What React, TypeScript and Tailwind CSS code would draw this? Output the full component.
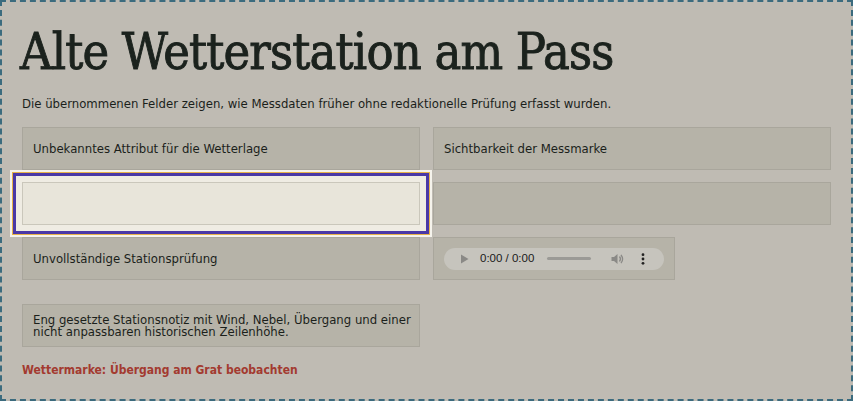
export default function App() {
  const sans = { fontFamily: '"DejaVu Sans Condensed", "DejaVu Sans", sans-serif' };
  return (
    <div
      className="h-[401px] w-[853px] border-2 border-dashed border-[#3b6b7e] bg-[#bfbbb3] px-5 pt-[18px] text-[#1b1f1b]"
      style={sans}
    >
      <h1 className="-ml-[2px] font-['DejaVu_Serif_Condensed','DejaVu_Serif',serif] text-[50px] leading-[64px] tracking-[-0.8px] text-[#1b221d] [-webkit-text-stroke:0.9px_#1b221d]">
        Alte Wetterstation am Pass
      </h1>
      <p className="mt-[11px] text-[13px] leading-[18px]">
        Die übernommenen Felder zeigen, wie Messdaten früher ohne redaktionelle Prüfung erfasst wurden.
      </p>

      <div className="mt-[14px] grid grid-cols-[398px_398px] gap-x-[13px] gap-y-3">
        <div className="flex h-[43px] items-center border border-[#a9a69c] bg-[#b6b3a8] px-[10px] text-[13px]">
          Unbekanntes Attribut für die Wetterlage
        </div>
        <div className="flex h-[43px] items-center border border-[#a9a69c] bg-[#b6b3a8] px-[10px] text-[13px]">
          Sichtbarkeit der Messmarke
        </div>

        <div className="relative h-[43px]">
          <div className="absolute -inset-[12px] bg-[#f5f3ec]" />
          <div className="absolute -inset-[10px] border border-[#e7b24a]" />
          <div className="absolute -inset-[9px] border-[3px] border-[#4a38a6] bg-[#efece3]" />
          <div className="absolute inset-0 border border-[#cac7bb] bg-[#e8e5da]" />
        </div>
        <div className="h-[43px] border border-[#a9a69c] bg-[#b6b3a8]" />

        <div className="flex h-[43px] items-center border border-[#a9a69c] bg-[#b6b3a8] px-[10px] text-[13px]">
          Unvollständige Stationsprüfung
        </div>
        <div className="flex h-[43px] w-[242px] items-center border border-[#a9a69c] bg-[#b6b3a8] px-[10px]">
          <div
            className="flex h-[22px] w-[220px] items-center rounded-full bg-[#c6c4bd] pl-[16px] pr-[14px] text-[11.5px] text-[#1a1a1a]"
            style={{ fontFamily: '"Liberation Sans", Arial, sans-serif' }}
          >
            <svg width="9" height="10" viewBox="0 0 9 10" className="text-[#8a8986]">
              <path d="M1 0.5 L8.5 5 L1 9.5 Z" fill="currentColor" />
            </svg>
            <span className="ml-[11px]">0:00 / 0:00</span>
            <div className="ml-[13px] h-[3px] w-[44px] rounded-full bg-[#9b9a96]" />
            <svg width="14" height="12" viewBox="0 0 14 12" className="ml-[20px] text-[#8a8986]">
              <path d="M0.5 4 H3 L6.5 1 V11 L3 8 H0.5 Z" fill="currentColor" />
              <path d="M8.5 3.5 Q10.5 6 8.5 8.5" stroke="currentColor" strokeWidth="1.3" fill="none" />
              <path d="M10 1.8 Q13.2 6 10 10.2" stroke="currentColor" strokeWidth="1.3" fill="none" />
            </svg>
            <svg width="4" height="12" viewBox="0 0 4 12" className="ml-[16px]">
              <circle cx="2" cy="1.7" r="1.4" fill="#222" />
              <circle cx="2" cy="6" r="1.4" fill="#222" />
              <circle cx="2" cy="10.3" r="1.4" fill="#222" />
            </svg>
          </div>
        </div>
      </div>

      <div className="mt-[24px] h-[43px] w-[398px] border border-[#a9a69c] bg-[#b6b3a8] pl-[10px] pr-[2px] pt-[9px] text-[13px] leading-[12px]">
        Eng gesetzte Stationsnotiz mit Wind, Nebel, Übergang und einer nicht anpassbaren historischen Zeilenhöhe.
      </div>

      <p className="mt-[14px] text-[12px] font-bold leading-[18px] text-[#a33a30]">
        Wettermarke: Übergang am Grat beobachten
      </p>
    </div>
  );
}
